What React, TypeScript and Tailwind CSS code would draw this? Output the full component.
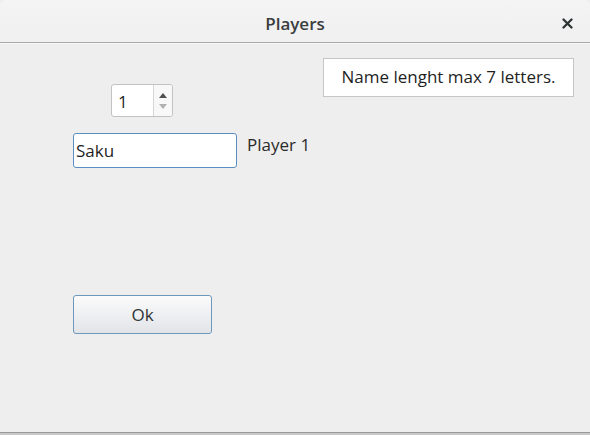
export default function App() {
  return (
    <div className="flex h-[435px] w-[590px] flex-col overflow-hidden bg-[#eeeeee] font-['Open_Sans',sans-serif] text-[#2e3436]">
      <header className="grid h-[43px] shrink-0 grid-cols-[1fr_auto_1fr] items-center rounded-t-md border-b border-[#a9a9a7] bg-gradient-to-b from-[#f4f4f4] to-[#f0f0f0]">
        <span />
        <span className="pt-[4px] text-[17px] font-semibold leading-none text-[#3a3d3e]">Players</span>
        <span className="mr-[17px] justify-self-end pt-[4px]">
          <svg width="11" height="11" viewBox="0 0 11 11">
            <path d="M1.5 1.5 L9.5 9.5 M9.5 1.5 L1.5 9.5" stroke="#2e3436" strokeWidth="2.3" strokeLinecap="round" />
          </svg>
        </span>
      </header>

      <main className="flex-1 border-t border-[#f8f8f8] text-[17px] leading-none">
        <div className="flex items-start justify-between pt-[14px]">
          <div className="ml-[111px] mt-[26px] flex h-[33px] w-[62px] overflow-hidden rounded-[3px] border border-[#c2c2c2] bg-white">
            <span className="flex-1 pl-[6px] pt-[8px] text-[#1f1f1f]">1</span>
            <div className="flex w-[19px] flex-col items-center justify-center gap-[6px] border-l border-[#d6d6d6] bg-[#f8f8f8]">
              <svg width="8" height="5" viewBox="0 0 8 5"><path d="M0 5 L4 0 L8 5 Z" fill="#505050" /></svg>
              <svg width="8" height="5" viewBox="0 0 8 5"><path d="M0 0 L4 5 L8 0 Z" fill="#b0b0b0" /></svg>
            </div>
          </div>

          <div className="mr-[16px] flex h-[39px] w-[251px] items-center justify-center border border-[#c6c6c6] bg-white pb-[2px] text-[#1f1f1f]">
            Name lenght max 7 letters.
          </div>
        </div>

        <div className="ml-[73px] mt-[16px] flex items-start gap-[10px]">
          <div className="h-[35px] w-[164px] rounded-[3px] border border-[#5b8fc2] bg-white pl-[2px] pt-[8px] text-[#1f1f1f]">
            Saku
          </div>
          <span className="pt-[3px] text-[#2a2a2a]">Player 1</span>
        </div>

        <button className="ml-[73px] mt-[127px] flex h-[39px] w-[139px] items-center justify-center rounded-[3px] border border-[#6d97bc] bg-gradient-to-b from-[#fbfbfb] to-[#e2e4e8] text-[#2e3436]">
          Ok
        </button>
      </main>

      <footer className="h-[3px] shrink-0 border-t border-[#9a9a9a] bg-[#c8c8c8]" />
    </div>
  );
}
